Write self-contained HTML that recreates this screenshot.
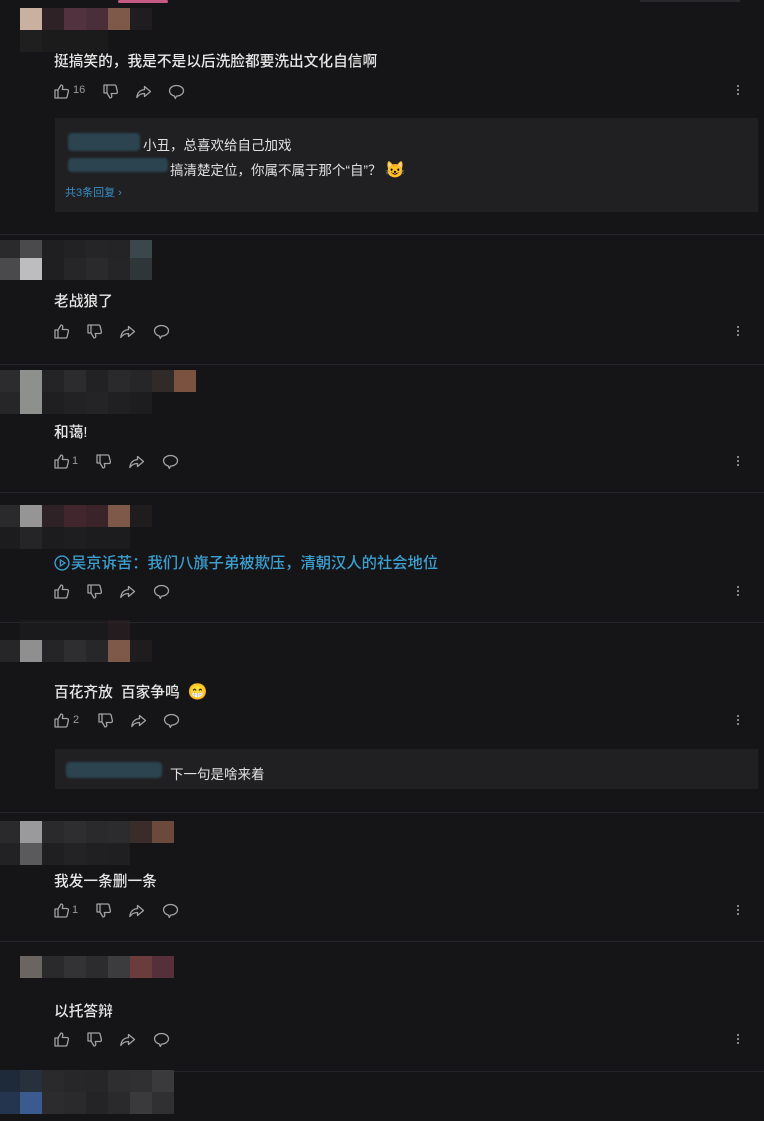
<!DOCTYPE html>
<html><head><meta charset="utf-8"><style>
body{margin:0;width:764px;height:1121px;background:#151517;position:relative;overflow:hidden;font-family:"Liberation Sans","Noto Sans CJK SC",sans-serif;}
.a{position:absolute}
.t{position:absolute;left:54px;font-size:14.7px;color:#e6e6e6;line-height:18px;white-space:nowrap;font-weight:500}
.sep{position:absolute;left:0;width:764px;height:1px;background:#26262a}
.m{position:absolute;display:flex}
.m i{display:block;width:22px;height:22px}
.ic{position:absolute;width:17px;height:17px;fill:none;stroke:#a2a2a2;stroke-width:1.3;stroke-linejoin:round;stroke-linecap:round}
.n{position:absolute;font-size:11px;color:#9a9a9a}
.dots{position:absolute;left:737px;width:3px}
.dots b{display:block;width:2px;height:2px;background:#aaa;margin:0 0 2px 0;border-radius:1px}
.box{position:absolute;left:55px;width:703px;background:#202023}
.rt{position:absolute;font-size:13.5px;color:#e0e0e0;white-space:nowrap}
.blur{position:absolute;background:#2b4450;border-radius:4px;filter:blur(1px)}
</style></head><body>
<svg width="0" height="0" style="position:absolute">
<defs>
<symbol id="up" viewBox="0 0 17 17"><path d="M2 7h3v8H2zM5 7l3-5c1.5 0 2 1 1.7 2.5L9.3 6.5H14c1 0 1.6.9 1.4 1.8l-1.3 5.5c-.2.8-.8 1.2-1.600 1.2H5"/></symbol>
<symbol id="dn" viewBox="0 0 17 17"><path d="M2 2h3v8H2zM5 2h7.5c.8 0 1.4.4 1.6 1.2l1.3 5.5c.2.9-.4 1.8-1.4 1.8H9.3l.4 2c.3 1.5-.2 2.5-1.7 2.5L5 10"/></symbol>
<symbol id="sh" viewBox="0 0 17 17"><path d="M9.5 3.5l6 5-6 5v-3C6 10.5 3.5 12 1.8 14.5 2.3 9.5 5 7 9.5 6.6z"/></symbol>
<symbol id="cm" viewBox="0 0 17 17"><path d="M8.5 2.5c3.9 0 7 2.4 7 5.3s-3.1 5.3-7 5.3l-1.2 2.3-1.1-2.5C3.5 12.3 1.5 10.3 1.5 7.8c0-2.9 3.1-5.3 7-5.3z"/></symbol>
</defs></svg>

<div class="a" style="left:118px;top:0;width:50px;height:3px;background:#c75a82;border-radius:2px"></div>
<div class="a" style="left:640px;top:0;width:100px;height:2px;background:#2a2a2e"></div>

<!-- comment 1 -->
<div class="m" style="left:20px;top:8px"><i style="background:#c9b0a0"></i><i style="background:#2e2226"></i><i style="background:#53323f"></i><i style="background:#4a2f3a"></i><i style="background:#7e5848"></i><i style="background:#1f1d1f"></i></div>
<div class="m" style="left:20px;top:30px;opacity:.5"><i style="background:#2a2a2a"></i><i style="background:#222"></i><i style="background:#222"></i><i style="background:#222"></i></div>
<div class="t" style="top:53px">挺搞笑的，我是不是以后洗脸都要洗出文化自信啊</div>
<svg class="ic" style="left:53px;top:83px"><use href="#up"/></svg><span class="n" style="left:73px;top:84px">16</span>
<svg class="ic" style="left:102px;top:83px"><use href="#dn"/></svg>
<svg class="ic" style="left:135px;top:83px"><use href="#sh"/></svg>
<svg class="ic" style="left:168px;top:83px"><use href="#cm"/></svg>
<div class="dots" style="top:85px"><b></b><b></b><b></b></div>
<div class="box" style="top:118px;height:94px"></div>
<div class="blur" style="left:68px;top:133px;width:72px;height:18px"></div>
<div class="rt" style="left:143px;top:134px">小丑，总喜欢给自己加戏</div>
<div class="blur" style="left:68px;top:158px;width:100px;height:14px"></div>
<div class="rt" style="left:170px;top:159px">搞清楚定位，你属不属于那个“自”？ <span style="font-size:16px">😺</span></div>
<div class="rt" style="left:65px;top:184px;font-size:11px;color:#3a8fc6">共3条回复 ›</div>
<div class="sep" style="top:234px"></div>

<!-- comment 2 -->
<div class="m" style="left:0;top:240px"><i style="background:#2a2a2c;width:20px"></i><i style="background:#4a4a4d"></i><i style="background:#1f1f21"></i><i style="background:#222224"></i><i style="background:#252527"></i><i style="background:#242426"></i><i style="background:#3a474d"></i></div>
<div class="m" style="left:0;top:258px"><i style="background:#4a4a4c;width:20px"></i><i style="background:#bdbdbf"></i><i style="background:#1f1f21"></i><i style="background:#262628"></i><i style="background:#2a2a2c"></i><i style="background:#252527"></i><i style="background:#2e363a"></i></div>
<div class="t" style="top:293px">老战狼了</div>
<svg class="ic" style="left:53px;top:323px"><use href="#up"/></svg>
<svg class="ic" style="left:86px;top:323px"><use href="#dn"/></svg>
<svg class="ic" style="left:119px;top:323px"><use href="#sh"/></svg>
<svg class="ic" style="left:153px;top:323px"><use href="#cm"/></svg>
<div class="dots" style="top:326px"><b></b><b></b><b></b></div>
<div class="sep" style="top:364px"></div>

<!-- comment 3 -->
<div class="m" style="left:0;top:370px"><i style="background:#2c2c2e;width:20px"></i><i style="background:#8d908c"></i><i style="background:#242426"></i><i style="background:#2c2c2e"></i><i style="background:#222224"></i><i style="background:#2a2a2c"></i><i style="background:#262628"></i><i style="background:#302a28"></i><i style="background:#7b5140"></i></div>
<div class="m" style="left:0;top:392px"><i style="background:#262628;width:20px"></i><i style="background:#8d908c"></i><i style="background:#1f1f21"></i><i style="background:#222224"></i><i style="background:#242426"></i><i style="background:#202022"></i><i style="background:#1d1d1f"></i></div>
<div class="t" style="top:424px">和蔼!</div>
<svg class="ic" style="left:53px;top:453px"><use href="#up"/></svg><span class="n" style="left:72px;top:455px">1</span>
<svg class="ic" style="left:95px;top:453px"><use href="#dn"/></svg>
<svg class="ic" style="left:128px;top:453px"><use href="#sh"/></svg>
<svg class="ic" style="left:162px;top:453px"><use href="#cm"/></svg>
<div class="dots" style="top:456px"><b></b><b></b><b></b></div>
<div class="sep" style="top:492px"></div>

<!-- comment 4 -->
<div class="m" style="left:0;top:505px"><i style="background:#2a2a2c;width:20px"></i><i style="background:#959595"></i><i style="background:#2e2226"></i><i style="background:#42262e"></i><i style="background:#3a2429"></i><i style="background:#7e5848"></i><i style="background:#1e1c1d"></i></div>
<div class="m" style="left:0;top:527px;opacity:.7"><i style="background:#202022;width:20px"></i><i style="background:#2c2c2e"></i><i style="background:#202022"></i><i style="background:#222224"></i><i style="background:#202022"></i><i style="background:#1f1f21"></i></div>
<div class="t" style="top:555px;color:#3b9fd0;font-size:15.3px"><svg style="vertical-align:-3px;margin-right:1px" width="16" height="16" viewBox="0 0 15 15"><circle cx="7.5" cy="7.5" r="6.5" fill="none" stroke="#3b9fd0" stroke-width="1.3"/><path d="M6 4.7v5.6l4.3-2.8z" fill="none" stroke="#3b9fd0" stroke-width="1.2"/></svg>吴京诉苦：我们八旗子弟被欺压，清朝汉人的社会地位</div>
<svg class="ic" style="left:53px;top:583px"><use href="#up"/></svg>
<svg class="ic" style="left:86px;top:583px"><use href="#dn"/></svg>
<svg class="ic" style="left:119px;top:583px"><use href="#sh"/></svg>
<svg class="ic" style="left:153px;top:583px"><use href="#cm"/></svg>
<div class="dots" style="top:586px"><b></b><b></b><b></b></div>
<div class="sep" style="top:622px"></div>

<!-- comment 5 -->
<div class="m" style="left:20px;top:620px;opacity:.6"><i style="background:#1e1e20"></i><i style="background:#1e1e20"></i><i style="background:#1e1e20"></i><i style="background:#1e1e20"></i><i style="background:#2e2224"></i></div>
<div class="m" style="left:0;top:640px"><i style="background:#262628;width:20px"></i><i style="background:#8f8f8f"></i><i style="background:#252527"></i><i style="background:#2e2e30"></i><i style="background:#272729"></i><i style="background:#7e5848"></i><i style="background:#1e1c1d"></i></div>
<div class="t" style="top:684px">百花齐放&nbsp; 百家争鸣 <span style="font-size:16px;margin-left:4px">😁</span></div>
<svg class="ic" style="left:53px;top:712px"><use href="#up"/></svg><span class="n" style="left:73px;top:714px">2</span>
<svg class="ic" style="left:97px;top:712px"><use href="#dn"/></svg>
<svg class="ic" style="left:130px;top:712px"><use href="#sh"/></svg>
<svg class="ic" style="left:163px;top:712px"><use href="#cm"/></svg>
<div class="dots" style="top:715px"><b></b><b></b><b></b></div>
<div class="box" style="top:749px;height:40px"></div>
<div class="blur" style="left:66px;top:762px;width:96px;height:16px"></div>
<div class="rt" style="left:170px;top:763px">下一句是啥来着</div>
<div class="sep" style="top:812px"></div>

<!-- comment 6 -->
<div class="m" style="left:0;top:821px"><i style="background:#2a2a2c;width:20px"></i><i style="background:#9a9a9c"></i><i style="background:#2a2a2c"></i><i style="background:#2e2e30"></i><i style="background:#2a2a2c"></i><i style="background:#2c2c2e"></i><i style="background:#3a2c28"></i><i style="background:#6b4a3c"></i></div>
<div class="m" style="left:0;top:843px"><i style="background:#222224;width:20px"></i><i style="background:#5a5a5c"></i><i style="background:#1f1f21"></i><i style="background:#232325"></i><i style="background:#202022"></i><i style="background:#1f1f21"></i></div>
<div class="t" style="top:873px">我发一条删一条</div>
<svg class="ic" style="left:53px;top:902px"><use href="#up"/></svg><span class="n" style="left:72px;top:904px">1</span>
<svg class="ic" style="left:95px;top:902px"><use href="#dn"/></svg>
<svg class="ic" style="left:128px;top:902px"><use href="#sh"/></svg>
<svg class="ic" style="left:162px;top:902px"><use href="#cm"/></svg>
<div class="dots" style="top:905px"><b></b><b></b><b></b></div>
<div class="sep" style="top:941px"></div>

<!-- comment 7 -->
<div class="m" style="left:20px;top:956px"><i style="background:#6a6560"></i><i style="background:#2a2a2c"></i><i style="background:#333335"></i><i style="background:#2c2c2e"></i><i style="background:#3c3c3e"></i><i style="background:#6a3c3c"></i><i style="background:#55303a"></i></div>
<div class="t" style="top:1003px">以托答辩</div>
<svg class="ic" style="left:53px;top:1031px"><use href="#up"/></svg>
<svg class="ic" style="left:86px;top:1031px"><use href="#dn"/></svg>
<svg class="ic" style="left:119px;top:1031px"><use href="#sh"/></svg>
<svg class="ic" style="left:153px;top:1031px"><use href="#cm"/></svg>
<div class="dots" style="top:1034px"><b></b><b></b><b></b></div>
<div class="sep" style="top:1071px"></div>

<!-- comment 8 -->
<div class="m" style="left:0;top:1070px"><i style="background:#1e2a3a;width:20px"></i><i style="background:#27313d"></i><i style="background:#2a2a2c"></i><i style="background:#272729"></i><i style="background:#262628"></i><i style="background:#2e2e30"></i><i style="background:#303032"></i><i style="background:#3a3a3c"></i></div>
<div class="m" style="left:0;top:1092px"><i style="background:#243550;width:20px"></i><i style="background:#3a5a90"></i><i style="background:#2c2c2e"></i><i style="background:#2a2a2c"></i><i style="background:#242426"></i><i style="background:#2a2a2c"></i><i style="background:#3a3a3c"></i><i style="background:#303032"></i></div>
</body></html>
